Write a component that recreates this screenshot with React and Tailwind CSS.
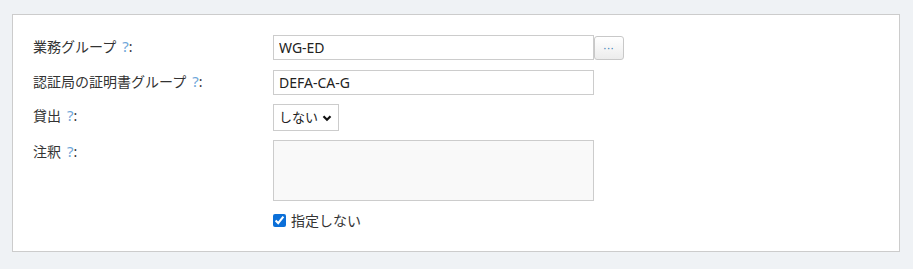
import React, { useState } from 'react';

const font = { fontFamily: '"Noto Sans", "Noto Sans CJK JP", sans-serif' };

const Label = ({ children }) => (
  <div className="w-[240px] shrink-0 text-[14px] leading-[20px] text-[#333]">
    {children}
    <span className="ml-[6px] text-[15px] text-[#6ea6d9]">?</span>:
  </div>
);

export default function App() {
  const [free, setFree] = useState(true);

  return (
    <div className="h-[269px] w-[913px] bg-[#eff2f5] pt-[14px] pl-[12px]" style={font}>
      <div className="h-[238px] w-[888px] border border-[#cccccc] bg-white pl-[20px] pt-[20px]">
        {/* 業務グループ */}
        <div className="flex items-start">
          <div className="pt-[1px]"><Label>業務グループ</Label></div>
          <input
            defaultValue="WG-ED"
            className="h-[25px] w-[321px] border border-[#cccccc] px-[5px] text-[14px] text-[#222] outline-none"
          />
          <button className="mt-[1px] h-[24px] w-[30px] rounded-[3px] border border-[#c8c8c8] bg-gradient-to-b from-white to-[#ececec] text-[10px] leading-none tracking-[1px] text-[#3d7fb8]">
            ···
          </button>
        </div>

        {/* 認証局の証明書グループ */}
        <div className="mt-[10px] flex items-start">
          <div className="pt-[1px]"><Label>認証局の証明書グループ</Label></div>
          <input
            defaultValue="DEFA-CA-G"
            className="h-[25px] w-[321px] border border-[#cccccc] px-[5px] text-[14px] text-[#222] outline-none"
          />
        </div>

        {/* 貸出 */}
        <div className="mt-[9px] flex items-start">
          <div className="pt-[1px]"><Label>貸出</Label></div>
          <div className="flex h-[27px] w-[66px] items-center border border-[#cccccc] pl-[5px] text-[13px] text-[#222]">
            <span>しない</span>
            <svg viewBox="0 0 10 10" className="ml-[4px] h-[10px] w-[10px]">
              <path d="M1.5 3.2 L5 6.7 L8.5 3.2" fill="none" stroke="#111" strokeWidth="2.2" />
            </svg>
          </div>
        </div>

        {/* 注釈 */}
        <div className="mt-[9px] flex items-start">
          <div className="pt-[1px]"><Label>注釈</Label></div>
          <div>
            <textarea className="block h-[61px] w-[321px] resize-none border border-[#cccccc] bg-[#f9f9f9] outline-none" />
            <label className="mt-[9px] flex items-center text-[14px] text-[#333]">
              <input
                type="checkbox"
                checked={free}
                onChange={() => setFree(!free)}
                className="m-0 h-[13px] w-[13px] accent-[#0b6fd8]"
              />
              <span className="ml-[5px]">指定しない</span>
            </label>
          </div>
        </div>
      </div>
    </div>
  );
}
